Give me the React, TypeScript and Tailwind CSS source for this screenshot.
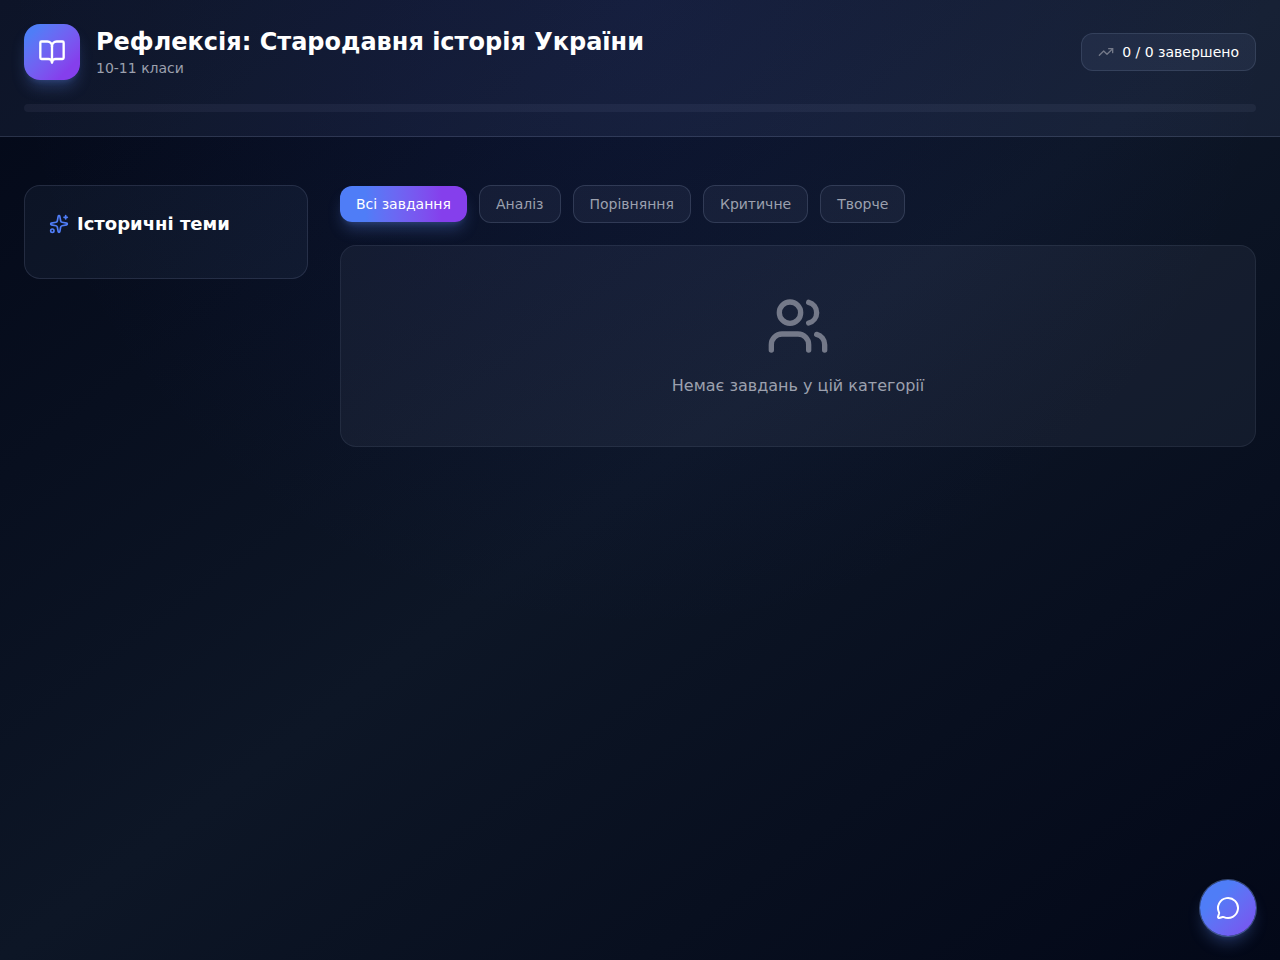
import { BookOpen, MessageCircle, Sparkles, TrendingUp, Users } from 'lucide-react';
import clsx from 'clsx';
import { useState } from 'react';

const categories = ['Всі завдання', 'Аналіз', 'Порівняння', 'Критичне', 'Творче'];

function Header() {
    return (
        <header className="border-b border-[#c8d7ff]/15 bg-[#a0bdff]/7 p-6">
            <div className="flex items-center justify-between">
                <div className="flex items-center gap-4">
                    <div className="flex size-14 shrink-0 items-center justify-center rounded-2xl bg-linear-to-br from-[#4f7df7] from-15% to-[#853fec] to-80% shadow-lg shadow-[#5c86e8]/30">
                        <BookOpen className="size-7" />
                    </div>
                    <div>
                        <h1 className="text-2xl font-bold">Рефлексія: Стародавня історія України</h1>
                        <p className="text-sm text-[#9ca0ae]">10-11 класи</p>
                    </div>
                </div>
                <div className="flex items-center gap-2 rounded-xl border border-[#c8d7ff]/12 bg-[#b0c8ff]/7 px-4 py-2">
                    <TrendingUp className="size-4 text-[#747989]" />
                    <span className="text-sm">0 / 0 завершено</span>
                </div>
            </div>
            <div className="mt-6 h-2 rounded-full bg-[#c8d2ff]/6" role="progressbar" aria-valuenow={0} aria-label="Прогрес" />
        </header>
    );
}

function Sidebar() {
    return (
        <aside className="rounded-2xl border border-[#c8d7ff]/12 bg-[#a0c0ff]/5 p-6">
            <h2 className="mb-4 flex items-center gap-2 text-lg font-bold">
                <Sparkles className="size-5 text-[#4f7df7]" />
                Історичні теми
            </h2>
        </aside>
    );
}

function EmptyState() {
    return (
        <div className="flex flex-col items-center rounded-2xl border border-[#c8d7ff]/8 bg-[#c0ccf0]/6 p-12">
            <Users className="mb-4 size-16 text-[#747989]" />
            <p className="text-base text-[#9ca0ae]">Немає завдань у цій категорії</p>
        </div>
    );
}

export default function App() {
    const [active, setActive] = useState(categories[0]);

    return (
        <div className="min-h-screen bg-[radial-gradient(circle_at_50%_0%,rgba(50,70,230,0.09),transparent_55%),linear-gradient(to_bottom_right,#030818,#0d1626,#030818)] font-['DejaVu_Sans',sans-serif] text-white">
            <Header />
            <main className="grid grid-cols-1 items-start gap-8 px-6 py-12 md:grid-cols-4">
                <Sidebar />
                <section className="md:col-span-3">
                    <div className="mb-[22px] flex flex-wrap items-center gap-3">
                        {categories.map((category) => (
                            <button
                                key={category}
                                type="button"
                                onClick={() => setActive(category)}
                                className={clsx(
                                    'rounded-xl px-4 py-2 text-sm',
                                    category === active
                                        ? 'bg-linear-to-r from-[#4f7df7] from-20% to-[#853fec] to-80% shadow-lg shadow-[#5c86e8]/30'
                                        : 'border border-[#c8d7ff]/15 bg-[#c0d0f0]/6 text-[#9ca0ae]'
                                )}
                            >
                                {category}
                            </button>
                        ))}
                    </div>
                    <EmptyState />
                </section>
            </main>
            <button
                type="button"
                aria-label="Чат"
                className="fixed right-6 bottom-6 flex size-14 items-center justify-center rounded-full bg-linear-to-br from-[#4f7df7] from-30% to-[#7b4eee] shadow-lg ring-1 shadow-[#5c86e8]/30 ring-[#5c78b8]/60"
            >
                <MessageCircle className="size-6" />
            </button>
        </div>
    );
}
